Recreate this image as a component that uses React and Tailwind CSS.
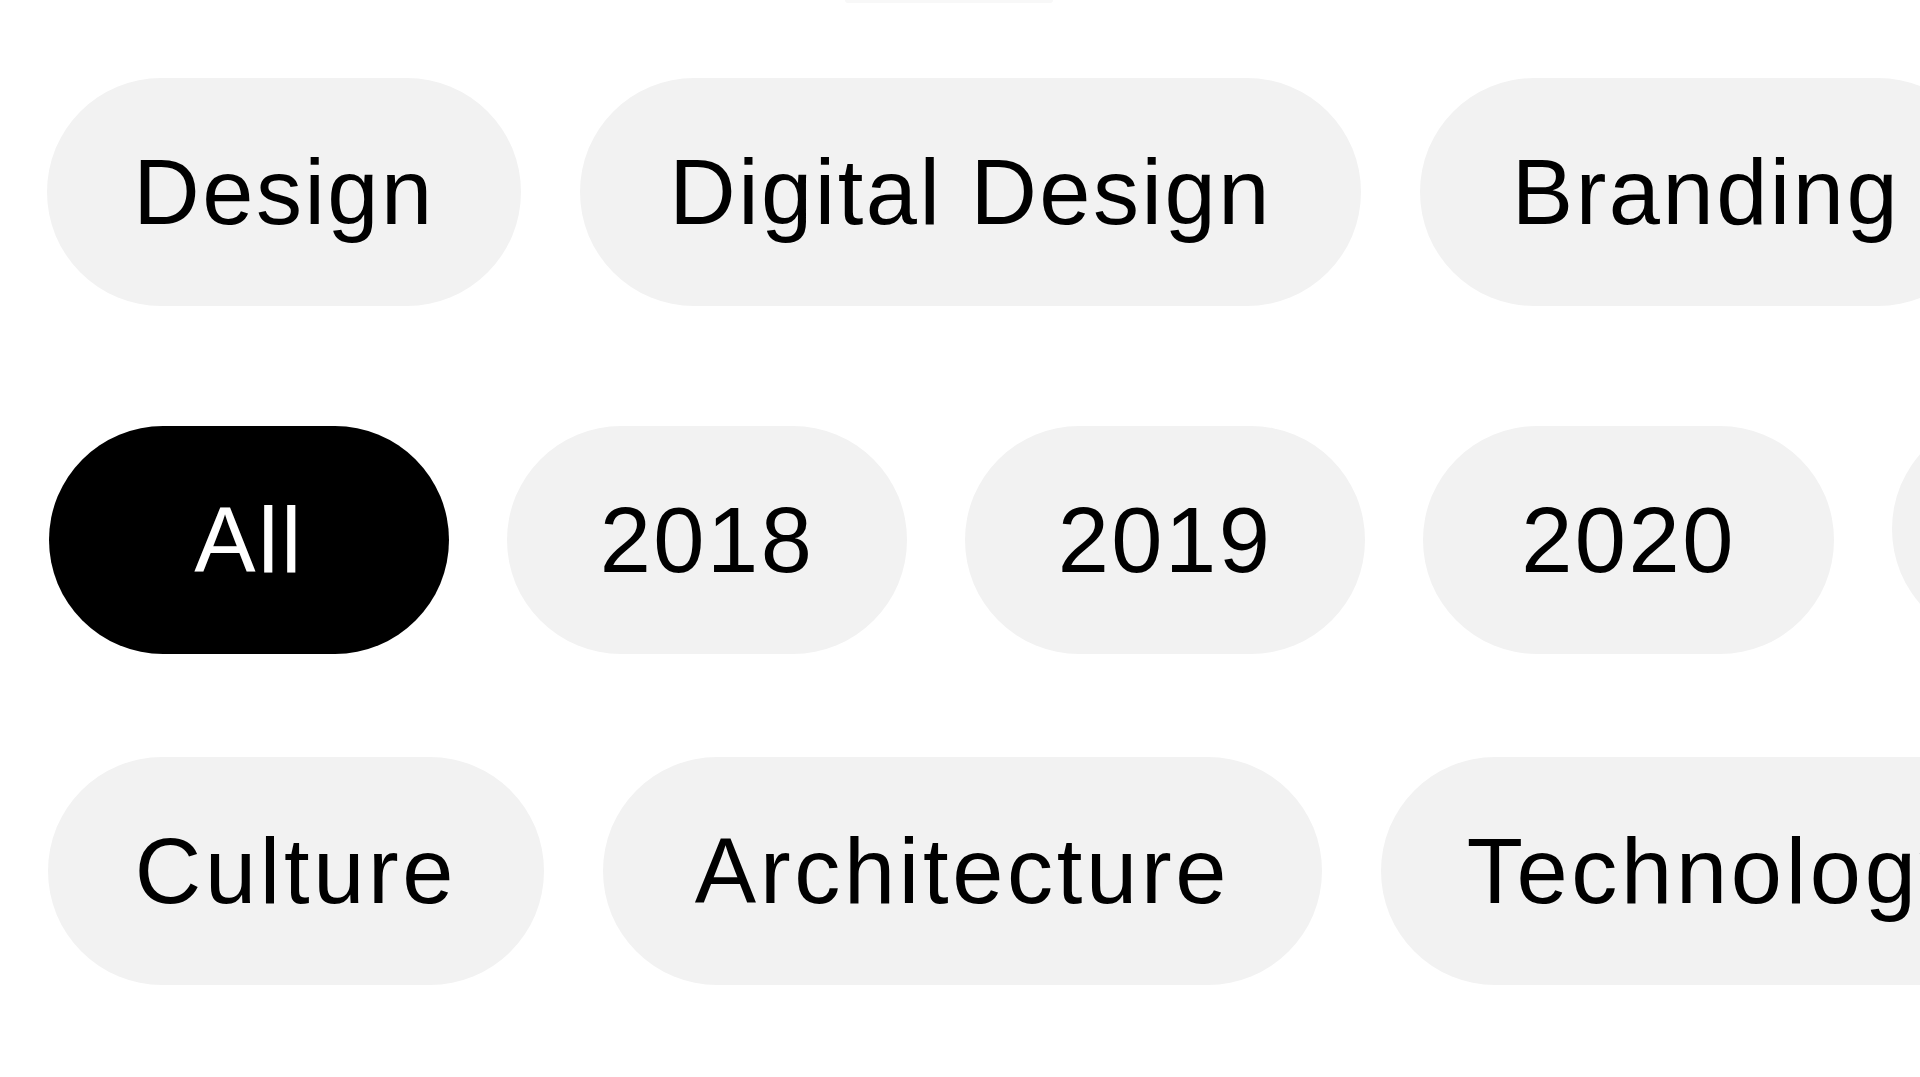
import React from "react";

function Pill({ label, width, active = false, extra = "", wide = false }) {
  return (
    <div
      className={
        "flex h-[228px] shrink-0 items-center justify-center whitespace-nowrap rounded-full " +
        (active ? "bg-black text-white " : "bg-[#f2f2f2] text-black ") +
        extra
      }
      style={{ width: width + "px" }}
    >
      <span
        className={
          "text-[92px] leading-none " +
          (wide ? "tracking-[3.7px]" : "tracking-[2.5px]")
        }
      >
        {label}
      </span>
    </div>
  );
}

export default function App() {
  return (
    <div className="h-[1077px] w-[1920px] overflow-hidden bg-white font-['Liberation_Sans',Arial,Helvetica,sans-serif]">
      <div className="ml-[845px] h-[3px] w-[208px] rounded-b-full bg-[#f8f8f8]" />

      <div className="mt-[75px] flex items-start gap-[59px] pl-[47px]">
        <Pill label="Design" width={474} />
        <Pill label="Digital Design" width={781} />
        <Pill label="Branding" width={572} />
      </div>

      <div className="mt-[120px] flex items-start gap-[58px] pl-[49px]">
        <Pill label="All" width={400} active />
        <Pill label="2018" width={400} />
        <Pill label="2019" width={400} />
        <Pill label="2020" width={411} />
        <Pill label="2021" width={400} extra="-mt-[11px]" />
      </div>

      <div className="mt-[103px] flex items-start gap-[59px] pl-[48px]">
        <Pill label="Culture" width={496} wide />
        <Pill label="Architecture" width={719} wide />
        <Pill label="Technology" width={674} wide />
      </div>
    </div>
  );
}
